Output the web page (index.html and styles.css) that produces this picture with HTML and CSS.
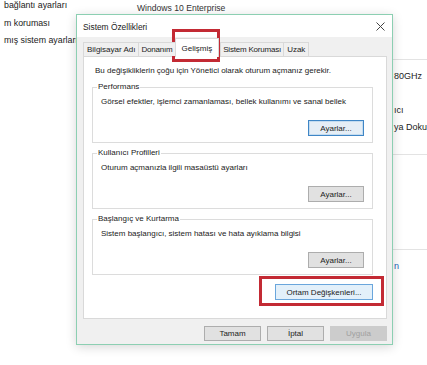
FILE: index.html
```html
<!DOCTYPE html>
<html lang="tr">
<head>
<meta charset="UTF-8">
<title>Sistem Özellikleri</title>
<link rel="stylesheet" href="styles.css">
</head>
<body>
<div class="backdrop">
<div class="side-links">
<div class="side-link">bağlantı ayarları</div>
<div class="side-link">m koruması</div>
<div class="side-link">mış sistem ayarları</div>
</div>
<div class="edition">Windows 10 Enterprise</div>
<div class="right-info">
<div class="info-rule"></div>
<div class="info-line cpu">80GHz</div>
<div class="info-line user">ıcı</div>
<div class="info-line touch">ya Doku</div>
<div class="info-rule second"></div>
<div class="info-rule third"></div>
<div class="info-link">n</div>
</div>
</div>

<!-- Dialog window -->
<div class="dialog">
<div class="title-bar">
<span class="title">Sistem Özellikleri</span>
<svg class="close" width="9" height="9" viewBox="0 0 9 9"><path d="M0.5 0.5L8.5 8.5M8.5 0.5L0.5 8.5" stroke="#444" stroke-width="1"/></svg>
</div>
<div class="dialog-body">
<div class="tabs">
<div class="tab">Bilgisayar Adı</div>
<div class="tab">Donanım</div>
<div class="tab active">Gelişmiş</div>
<div class="tab">Sistem Koruması</div>
<div class="tab">Uzak</div>
</div>
<div class="panel">
<div class="note">Bu değişikliklerin çoğu için Yönetici olarak oturum açmanız gerekir.</div>

<div class="group">
<div class="group-label">Performans</div>
<div class="group-text">Görsel efektler, işlemci zamanlaması, bellek kullanımı ve sanal bellek</div>
<div class="group-actions"><button class="btn focused">Ayarlar...</button></div>
</div>

<div class="group">
<div class="group-label">Kullanıcı Profilleri</div>
<div class="group-text">Oturum açmanızla ilgili masaüstü ayarları</div>
<div class="group-actions"><button class="btn">Ayarlar...</button></div>
</div>

<div class="group">
<div class="group-label">Başlangıç ve Kurtarma</div>
<div class="group-text">Sistem başlangıcı, sistem hatası ve hata ayıklama bilgisi</div>
<div class="group-actions"><button class="btn">Ayarlar...</button></div>
</div>

<div class="env-row"><button class="btn env">Ortam Değişkenleri...</button></div>
</div>
<div class="footer">
<button class="btn wide">Tamam</button>
<button class="btn wide">İptal</button>
<button class="btn wide disabled">Uygula</button>
</div>
</div>
</div>

<!-- red highlight marks -->
<div class="mark mark-tab"></div>
<div class="mark mark-env"></div>
</body>
</html>
```

FILE: styles.css
```css
* {
box-sizing: border-box;
}

body {
margin: 0;
width: 427px;
height: 365px;
overflow: hidden;
background: #fff;
font-family: "Liberation Sans", Arial, sans-serif;
font-size: 8px;
color: #222;
position: relative;
}

.backdrop {
position: relative;
height: 365px;
}

.side-links {
padding: 0 0 0 4px;
}

.side-link {
color: #1a1a1a;
font-size: 8.8px;
line-height: 17.5px;
}

.side-link:first-child {
margin-top: -3px;
}

.edition {
position: absolute;
left: 137px;
top: 6px;
font-size: 8.6px;
color: #333;
}

.right-info {
position: absolute;
left: 393px;
top: 0;
width: 34px;
height: 365px;
}

.info-rule {
position: absolute;
left: 0;
right: 0;
top: 62px;
border-top: 1px solid #e3e3e3;
}

.info-rule.second {
top: 157px;
}

.info-rule.third {
top: 252px;
}

.info-line {
position: absolute;
left: 1px;
font-size: 9px;
color: #222;
white-space: nowrap;
}

.cpu { top: 74px; }
.user { top: 108px; }
.touch { top: 125px; }

.info-link {
position: absolute;
left: 1px;
top: 264px;
color: #1d63b8;
font-size: 9px;
}

/* dialog window */
.dialog {
position: absolute;
left: 76px;
top: 14px;
width: 317px;
height: 331px;
border: 1px solid #8ccfb2;
background: #f0f0f0;
box-shadow: 0 2px 10px rgba(0, 0, 0, 0.16);
display: flex;
flex-direction: column;
}

.title-bar {
height: 22px;
flex-shrink: 0;
background: #fff;
display: flex;
align-items: center;
justify-content: space-between;
padding: 1px 7px 0 6px;
}

.title {
font-size: 8.4px;
color: #222;
}

.dialog-body {
flex: 1;
padding: 0 5px 0 6px;
display: flex;
flex-direction: column;
}

.tabs {
display: flex;
align-items: flex-end;
height: 19px;
flex-shrink: 0;
position: relative;
z-index: 1;
}

.tab {
height: 14px;
line-height: 14px;
padding: 0 3px;
border: 1px solid #d9d9d9;
border-bottom: none;
margin-right: -1px;
background: #f0f0f0;
color: #222;
}

.tab.active {
height: 19px;
line-height: 19px;
background: #fff;
padding: 0 6px;
margin: 0 1px -1px 0;
position: relative;
z-index: 2;
}

.tab:nth-child(2),
.tab:nth-child(4) {
letter-spacing: -0.2px;
padding: 0 2px;
}

.panel {
height: 263px;
flex-shrink: 0;
background: #fff;
border: 1px solid #d9d9d9;
padding: 8px 13px 0 8px;
}

.note {
line-height: 12px;
padding-left: 3px;
}

.group {
margin-top: 10px;
border: 1px solid #dcdcdc;
height: 56px;
position: relative;
padding: 8px 8px 0 8px;
}

.group-label {
position: absolute;
left: 4px;
top: -7px;
background: #fff;
padding: 0 1px;
line-height: 12px;
}

.group-text {
line-height: 12px;
}

.group-actions {
display: flex;
justify-content: flex-end;
margin-top: 12px;
}

.btn {
font-family: inherit;
font-size: 8px;
color: #222;
background: #e1e1e1;
border: 1px solid #adadad;
height: 16px;
width: 56px;
padding: 0;
}

.btn.focused {
border-color: #3f86c6;
box-shadow: inset 0 0 0 1px #c4dcf0;
background: #e5eef6;
}

.env-row {
display: flex;
justify-content: flex-end;
margin-top: 9px;
}

.btn.env {
width: 98px;
background: #e3f0fa;
border-color: #6aa6dc;
}

.footer {
display: flex;
justify-content: flex-end;
gap: 6px;
padding: 7px 0 0 0;
}

.btn.wide {
width: 57px;
height: 15px;
}

.btn.disabled {
color: #a0a0a0;
background: #cccccc;
border-color: #cccccc;
}

/* highlights drawn over the screenshot */
.mark {
position: absolute;
border: 3px solid #c32a34;
}

.mark-tab {
left: 172px;
top: 29px;
width: 48px;
height: 33px;
}

.mark-env {
left: 259px;
top: 276px;
width: 125px;
height: 30px;
}
```
